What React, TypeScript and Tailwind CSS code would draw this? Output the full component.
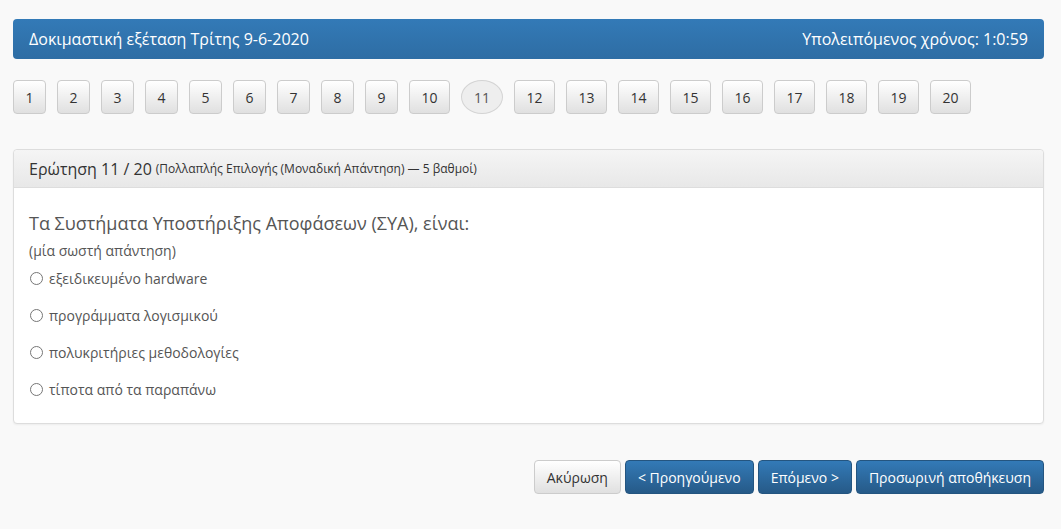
const pages = Array.from({ length: 20 }, (_, i) => i + 1);
const current = 11;

const options = [
  "εξειδικευμένο hardware",
  "προγράμματα λογισμικού",
  "πολυκριτήριες μεθοδολογίες",
  "τίποτα από τα παραπάνω",
];

export default function App() {
  return (
    <div className="min-h-[529px] bg-[#f9f9f9] pt-[19px] pr-[17px] pb-8 pl-[13px] font-['Open_Sans',sans-serif] text-[#333]">
      <div className="flex h-[40px] items-center justify-between rounded-[4px] bg-linear-to-b from-[#337ab7] to-[#2e6da4] px-[16px] text-[16px] text-white">
        <span>Δοκιμαστική εξέταση Τρίτης 9-6-2020</span>
        <span>Υπολειπόμενος χρόνος: 1:0:59</span>
      </div>

      <div className="mt-[21px] flex gap-[11px]">
        {pages.map((n) =>
          n === current ? (
            <span
              key={n}
              className="flex h-[34px] w-[42px] items-center justify-center rounded-[50%] border border-[#d4d4d4] bg-[#eeeeee] text-[14px] text-[#555]"
            >
              {n}
            </span>
          ) : (
            <button
              key={n}
              className={`flex h-[34px] items-center justify-center rounded-[4px] border border-[#ccc] bg-linear-to-b from-white to-[#e0e0e0] text-[14px] text-[#333] ${
                n < 10 ? "w-[33px]" : "w-[41px]"
              }`}
            >
              {n}
            </button>
          )
        )}
      </div>

      <div className="mt-[35px] rounded-[4px] border border-[#ddd] bg-white shadow-[0_1px_2px_rgba(0,0,0,0.05)]">
        <div className="flex h-[38px] items-center rounded-t-[4px] border-b border-[#ddd] bg-linear-to-b from-[#f5f5f5] to-[#e8e8e8] px-[15px]">
          <span className="text-[16px] text-[#333]">Ερώτηση 11 / 20</span>
          <span className="ml-[4px] text-[12px] text-[#333]">
            (Πολλαπλής Επιλογής (Μοναδική Απάντηση) — 5 βαθμοί)
          </span>
        </div>
        <div className="px-[15px] pt-[22px] pb-[24px] text-[#555]">
          <p className="text-[18px] leading-[26px]">
            Τα Συστήματα Υποστήριξης Αποφάσεων (ΣΥΑ), είναι:
          </p>
          <p className="mt-[5px] text-[14px] leading-[20px]">(μία σωστή απάντηση)</p>
          <div className="mt-[7px] flex flex-col gap-[17px]">
            {options.map((o) => (
              <label key={o} className="flex h-[20px] items-center text-[14px]">
                <span className="ml-[1px] h-[13px] w-[13px] rounded-full border border-[#767676] bg-white" />
                <span className="ml-[6px]">{o}</span>
              </label>
            ))}
          </div>
        </div>
      </div>

      <div className="mt-[36px] flex justify-end gap-[4px] text-[14px]">
        <button className="h-[34px] rounded-[4px] border border-[#ccc] bg-linear-to-b from-white to-[#e0e0e0] px-[12px] text-[#333]">
          Ακύρωση
        </button>
        <button className="h-[34px] rounded-[4px] border border-[#245580] bg-linear-to-b from-[#337ab7] to-[#265a88] px-[12px] text-white">
          &lt; Προηγούμενο
        </button>
        <button className="h-[34px] rounded-[4px] border border-[#245580] bg-linear-to-b from-[#337ab7] to-[#265a88] px-[12px] text-white">
          Επόμενο &gt;
        </button>
        <button className="h-[34px] rounded-[4px] border border-[#245580] bg-linear-to-b from-[#337ab7] to-[#265a88] px-[12px] text-white">
          Προσωρινή αποθήκευση
        </button>
      </div>
    </div>
  );
}
